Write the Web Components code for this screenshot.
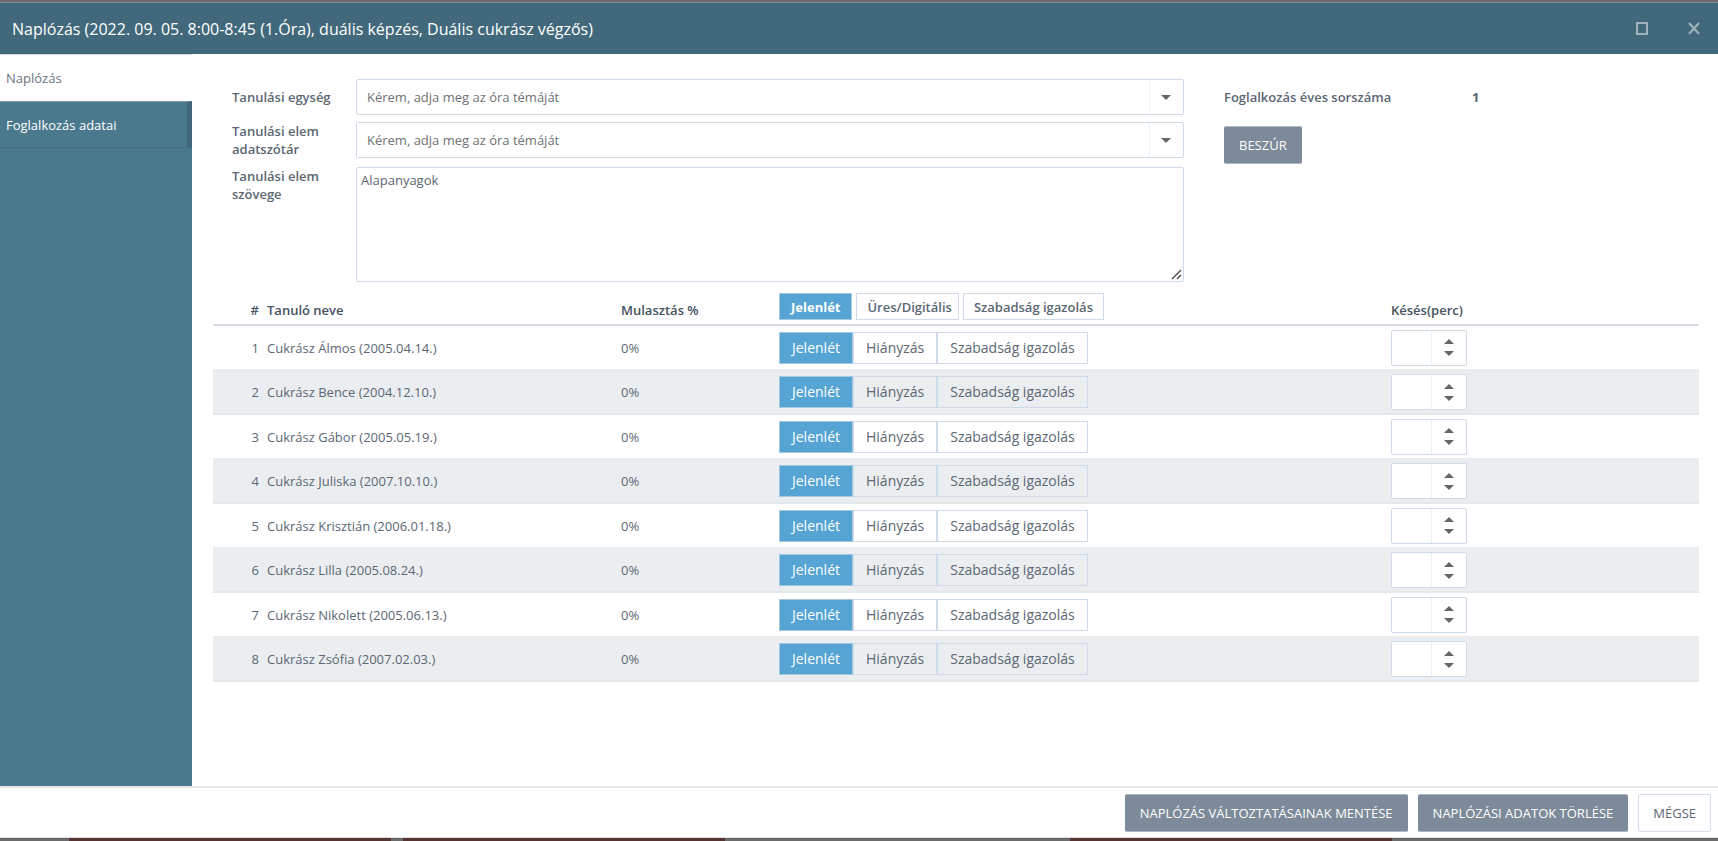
<!DOCTYPE html>
<html lang="hu">
<head>
<meta charset="utf-8">
<title>Naplózás</title>
<style>
html, body { height: 100%; margin: 0; }
body { font: 13px/18px "Open Sans", sans-serif; color: #5c6773; background: #fff; }
</style>
</head>
<body>
<lesson-dialog></lesson-dialog>
<script>
const define = (name, html, setup) => customElements.define(name, class extends HTMLElement {
  connectedCallback() {
    if (this.shadowRoot) return;
    const t = document.createElement('template');
    t.innerHTML = html;
    this.attachShadow({ mode: 'open' }).append(t.content.cloneNode(true));
    if (setup) setup(this, this.shadowRoot);
  }
});

define('title-bar', `
<style>
:host { display: flex; align-items: center; justify-content: space-between; height: 51px; padding: 0 18px 0 12px; background: #41697b; border-top: 1px solid #7d969f; color: #fff; }
h1 { margin: 0; font-size: 16px; line-height: 24px; font-weight: 400; }
div { display: flex; gap: 40px; }
button { display: flex; padding: 0; border: 0; background: none; color: #a0b4bd; }
svg { display: block; width: 12px; height: 13px; }
</style>
<h1><slot></slot></h1>
<div>
<button aria-label="Teljes méret"><svg viewBox="0 0 12 13" fill="none" stroke="currentColor" stroke-width="2"><path d="M1 1h10v11H1z"/></svg></button>
<button aria-label="Bezárás"><svg viewBox="0 0 12 13" fill="none" stroke="currentColor" stroke-width="2"><path d="M1 1l10 11M11 1L1 12"/></svg></button>
</div>`);

define('side-nav', `
<style>
:host { display: block; width: 192px; flex: none; background: #4a788c; }
a { display: block; box-sizing: border-box; height: 47px; padding: 14px 6px; color: #fff; text-decoration: none; border-top: 1px solid #7f9dab; border-right: 5px solid #41697b; border-bottom: 1px solid #446f82; }
a.active { background: #fff; color: #6a7480; border-color: #fff; border-top-color: #d5dde3; border-right: 0; }
</style>
<nav><a class="active" href="#naplozas">Naplózás</a><a href="#adatok">Foglalkozás adatai</a></nav>`);

define('action-button', `
<style>
:host { display: block; }
button { display: block; height: 38px; padding: 0 15px; border: 1px solid #aab6c4; border-width: 1px 0; border-radius: 2px; background: #7d8a99; color: #fff; font: inherit; white-space: nowrap; }
:host([plain]) button { border: 1px solid #d3deea; background: #fff; color: #5c6773; padding: 0 14px; }
</style>
<button><slot></slot></button>`);

define('topic-select', `
<style>
:host { display: grid; grid-template-columns: 124px 1fr; align-items: center; }
label { font-weight: 600; padding-right: 20px; }
.box { display: grid; }
select, svg { grid-area: 1 / 1; }
select { appearance: none; box-sizing: border-box; width: 100%; height: 36px; padding: 0 46px 0 10px; border: 1px solid #cfdbe8; border-radius: 2px; background: linear-gradient(#eceff3, #eceff3) right 33px top / 1px 100% no-repeat #fff; color: #6f7274; font: inherit; }
svg { justify-self: end; align-self: center; width: 10px; height: 5px; margin-right: 13px; pointer-events: none; }
</style>
<label for="s"></label>
<div class="box"><select id="s"><option>Kérem, adja meg az óra témáját</option></select>
<svg viewBox="0 0 10 5"><path d="M0 0h10L5 5z" fill="#666"/></svg></div>`,
(host, root) => { root.querySelector('label').textContent = host.getAttribute('label'); });

define('topic-text', `
<style>
:host { display: grid; grid-template-columns: 124px 1fr; }
label { font-weight: 600; padding-right: 20px; }
textarea { display: block; box-sizing: border-box; width: 100%; height: 115px; margin: 0; padding: 3px 4px; border: 1px solid #cfdbe8; border-radius: 2px; color: #5c6773; font: inherit; resize: vertical; }
textarea::-webkit-resizer { background: url("data:image/svg+xml,%3Csvg xmlns='http://www.w3.org/2000/svg' width='15' height='15'%3E%3Cpath d='M4 13L13 4M9 13L13 9' stroke='%23444' stroke-width='1.4'/%3E%3C/svg%3E") no-repeat right bottom; }
</style>
<label for="t">Tanulási elem szövege</label>
<textarea id="t">Alapanyagok</textarea>`);

define('choice-group', `
<style>
:host { display: flex; }
button { box-sizing: border-box; height: 32px; padding: 0 12px; border: 1px solid #cfdbe8; background: none; color: #5c6773; font-family: inherit; font-size: 14px; line-height: 20px; white-space: nowrap; }
button.on { background: #55a4d3; color: #fff; border-color: #a5c8e1; }
:host([head]) { gap: 4px; }
:host([head]) button { height: 27px; padding: 0 10px; font-size: 13px; line-height: 18px; font-weight: 600; }
:host([head]) button.on { padding: 0 11px; font-weight: 700; }
:host([head]) button:nth-of-type(2) { padding-right: 6px; }
</style>`,
(host, root) => {
  host.getAttribute('items').split('|').forEach((text, i) => {
    const b = document.createElement('button');
    b.textContent = text;
    if (!i) b.className = 'on';
    root.append(b);
  });
});

define('minute-input', `
<style>
:host { display: flex; box-sizing: border-box; width: 76px; height: 36px; border: 1px solid #cfdbe8; border-radius: 2px; background: #fff; }
input { flex: 1; min-width: 0; box-sizing: border-box; padding: 0 6px; border: 0; border-right: 1px solid #eceff3; background: none; font: inherit; color: inherit; }
div { display: flex; flex-direction: column; justify-content: center; align-items: center; gap: 7px; width: 34px; }
button { display: block; padding: 0; border: 0; background: none; }
svg { display: block; width: 10px; height: 5px; }
</style>
<input type="text" inputmode="numeric" aria-label="Késés percben">
<div><button aria-label="Növel"><svg viewBox="0 0 10 5"><path d="M0 5h10L5 0z" fill="#666"/></svg></button>
<button aria-label="Csökkent"><svg viewBox="0 0 10 5"><path d="M0 0h10L5 5z" fill="#666"/></svg></button></div>`);

define('student-table', `
<style>
:host { display: block; }
table { width: 100%; table-layout: fixed; border-collapse: separate; border-spacing: 0; }
th, td { box-sizing: border-box; padding: 0; text-align: left; }
th { height: 37px; color: #46525f; font-weight: 600; border-bottom: 2px solid #d5dae0; }
th.text { padding-top: 6px; }
td { height: 45px; border-bottom: 2px solid #ebeced; }
tbody tr:nth-child(even) td { height: 44px; border-bottom-color: #e5e8ea; }
th:first-child, td:first-child { text-align: right; padding-right: 8px; }
tbody tr:nth-child(even) { background: #ebeef1; }
</style>
<table>
<colgroup><col style="width:54px"><col style="width:354px"><col style="width:158px"><col style="width:612px"><col style="width:308px"></colgroup>
<thead><tr><th class="text">#</th><th class="text">Tanuló neve</th><th class="text">Mulasztás %</th><th><choice-group head items="Jelenlét|Üres/Digitális|Szabadság igazolás"></choice-group></th><th class="text">Késés(perc)</th></tr></thead>
<tbody></tbody>
</table>`,
(host, root) => {
  const names = ['Cukrász Álmos (2005.04.14.)', 'Cukrász Bence (2004.12.10.)', 'Cukrász Gábor (2005.05.19.)', 'Cukrász Juliska (2007.10.10.)', 'Cukrász Krisztián (2006.01.18.)', 'Cukrász Lilla (2005.08.24.)', 'Cukrász Nikolett (2005.06.13.)', 'Cukrász Zsófia (2007.02.03.)'];
  root.querySelector('tbody').innerHTML = names.map((n, i) => `<tr><td>${i + 1}</td><td>${n}</td><td>0%</td><td><choice-group items="Jelenlét|Hiányzás|Szabadság igazolás"></choice-group></td><td><minute-input></minute-input></td></tr>`).join('');
});

define('lesson-dialog', `
<style>
:host { display: flex; flex-direction: column; box-sizing: border-box; min-height: 100%; border-top: 2px solid #6b6b6b; }
.body { display: flex; flex: 1; }
main { flex: 1; min-width: 0; padding: 25px 19px 24px 21px; }
.form { display: grid; grid-template-columns: 952fr 475fr; column-gap: 40px; padding-left: 19px; }
.fields { display: grid; row-gap: 7px; }
topic-text { padding-top: 2px; }
.number { display: grid; grid-template-columns: 248px 1fr; align-items: center; height: 36px; font-weight: 600; }
.number b { font-weight: 700; }
.side { display: flex; flex-direction: column; align-items: flex-start; gap: 11px; }
student-table { padding-top: 7px; }
footer { display: flex; justify-content: flex-end; gap: 10px; padding: 6px 7px 5px; border-top: 2px solid #e8e8e8; border-bottom: 1px solid #ddd; }
.under { height: 3px; background: linear-gradient(90deg, #6b6b6b 69px, #573434 69px 391px, #6b6b6b 391px 403px, #573434 403px 725px, #6b6b6b 725px 1070px, #573434 1070px 1392px, #6b6b6b 1392px); }
</style>
<title-bar>Naplózás (2022. 09. 05. 8:00-8:45 (1.Óra), duális képzés, Duális cukrász végzős)</title-bar>
<div class="body">
<side-nav></side-nav>
<main>
<div class="form">
<div class="fields">
<topic-select label="Tanulási egység"></topic-select>
<topic-select label="Tanulási elem adatszótár"></topic-select>
<topic-text></topic-text>
</div>
<div class="side">
<div class="number"><span>Foglalkozás éves sorszáma</span><b>1</b></div>
<action-button>BESZÚR</action-button>
</div>
</div>
<student-table></student-table>
</main>
</div>
<footer><action-button>NAPLÓZÁS VÁLTOZTATÁSAINAK MENTÉSE</action-button><action-button>NAPLÓZÁSI ADATOK TÖRLÉSE</action-button><action-button plain>MÉGSE</action-button></footer>
<div class="under"></div>`);
</script>
</body>
</html>
